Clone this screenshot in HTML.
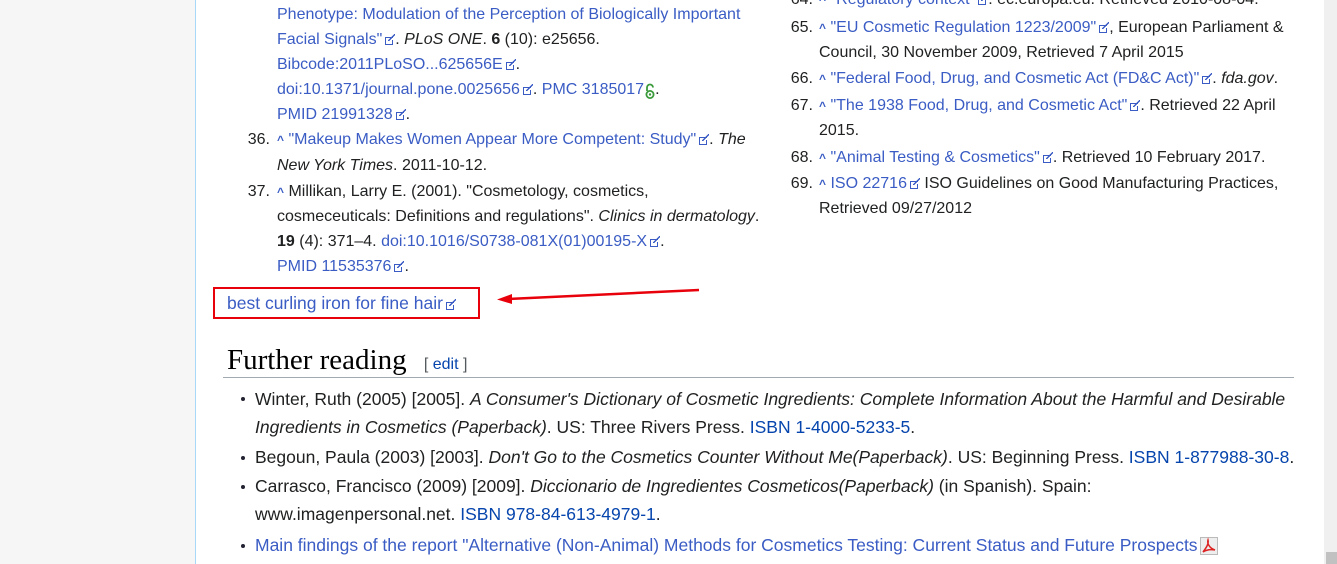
<!DOCTYPE html>
<html><head><meta charset="utf-8"><style>
body{margin:0;width:1337px;height:564px;overflow:hidden;background:#fff;font-family:"Liberation Sans",Arial,sans-serif;font-size:16px;color:#202122;position:relative}
.l{position:absolute;white-space:nowrap;line-height:20px}
.f{font-size:17.5px}
a{color:#3a5cc4;text-decoration:none}
a.d{color:#0645ad}
.e{display:inline-block;width:12px;height:11px;vertical-align:-1px;margin-left:1px;background:
linear-gradient(#3a5cc4,#3a5cc4) 2px 3px/8px 1px no-repeat,
linear-gradient(#3a5cc4,#3a5cc4) 2px 10px/8px 1px no-repeat,
linear-gradient(#3a5cc4,#3a5cc4) 2px 3px/1px 8px no-repeat,
linear-gradient(#3a5cc4,#3a5cc4) 9px 6px/1px 5px no-repeat,
linear-gradient(135deg,transparent 45%,#3a5cc4 45%,#3a5cc4 60%,transparent 60%) 5px 0/7px 7px no-repeat}
.n{position:absolute;text-align:right;width:30px;line-height:20px}
.c{color:#3a5cc4;font-weight:bold;font-size:12px}
.b{position:absolute;width:5px;height:5px;border-radius:50%;background:#202122}
</style></head><body>
<div style="position:absolute;left:0;top:0;width:195px;height:564px;background:#f6f6f6"></div>
<div style="position:absolute;left:195px;top:0;width:1px;height:564px;background:#a7d7f9"></div>
<div style="position:absolute;left:1324px;top:0;width:13px;height:564px;background:#f0f0f0"></div>
<div style="position:absolute;left:1326px;top:552px;width:11px;height:12px;background:#c1c1c1"></div>

<div class="l" style="left:277px;top:5px"><a>Phenotype: Modulation of the Perception of Biologically Important</a></div>
<div class="l" style="left:277px;top:30px"><a>Facial Signals"</a><span class="e"></span>. <i>PLoS ONE</i>. <b>6</b> (10): e25656.</div>
<div class="l" style="left:277px;top:55px"><a>Bibcode:2011PLoSO...625656E</a><span class="e"></span>.</div>
<div class="l" style="left:277px;top:80px"><a>doi:10.1371/journal.pone.0025656</a><span class="e"></span>. <a>PMC 3185017</a><svg width="10" height="16" style="vertical-align:-5px;margin-left:1px" viewBox="0 0 10 16"><path d="M2 8V4.5a3 3 0 0 1 6 0" fill="none" stroke="#3a9a3a" stroke-width="1.8"/><circle cx="5" cy="11.5" r="3.6" fill="none" stroke="#3a9a3a" stroke-width="1.8"/><circle cx="5" cy="11.5" r="1.2" fill="#3a9a3a"/></svg>.</div>
<div class="l" style="left:277px;top:105px"><a>PMID 21991328</a><span class="e"></span>.</div>
<div class="n" style="left:240px;top:130px">36.</div>
<div class="l" style="left:277px;top:130px"><span class="c">^</span> <a>"Makeup Makes Women Appear More Competent: Study"</a><span class="e"></span>. <i>The</i></div>
<div class="l" style="left:277px;top:156px"><i>New York Times</i>. 2011-10-12.</div>
<div class="n" style="left:240px;top:182px">37.</div>
<div class="l" style="left:277px;top:182px"><span class="c">^</span> Millikan, Larry E. (2001). "Cosmetology, cosmetics,</div>
<div class="l" style="left:277px;top:207px">cosmeceuticals: Definitions and regulations". <i>Clinics in dermatology</i>.</div>
<div class="l" style="left:277px;top:232px"><b>19</b> (4): 371–4. <a>doi:10.1016/S0738-081X(01)00195-X</a><span class="e"></span>.</div>
<div class="l" style="left:277px;top:257px"><a>PMID 11535376</a><span class="e"></span>.</div>

<div class="l" style="left:819px;top:-10px"><span class="c">^</span> <a>"Regulatory context"</a><span class="e"></span>. ec.europa.eu. Retrieved 2010-08-04.</div>
<div class="n" style="left:783px;top:-10px">64.</div>
<div class="n" style="left:783px;top:18px">65.</div>
<div class="l" style="left:819px;top:18px"><span class="c">^</span> <a>"EU Cosmetic Regulation 1223/2009"</a><span class="e"></span>, European Parliament &amp;</div>
<div class="l" style="left:819px;top:43px">Council, 30 November 2009, Retrieved 7 April 2015</div>
<div class="n" style="left:783px;top:69px">66.</div>
<div class="l" style="left:819px;top:69px"><span class="c">^</span> <a>"Federal Food, Drug, and Cosmetic Act (FD&amp;C Act)"</a><span class="e"></span>. <i>fda.gov</i>.</div>
<div class="n" style="left:783px;top:96px">67.</div>
<div class="l" style="left:819px;top:96px"><span class="c">^</span> <a>"The 1938 Food, Drug, and Cosmetic Act"</a><span class="e"></span>. Retrieved 22 April</div>
<div class="l" style="left:819px;top:121px">2015.</div>
<div class="n" style="left:783px;top:148px">68.</div>
<div class="l" style="left:819px;top:148px"><span class="c">^</span> <a>"Animal Testing &amp; Cosmetics"</a><span class="e"></span>. Retrieved 10 February 2017.</div>
<div class="n" style="left:783px;top:174px">69.</div>
<div class="l" style="left:819px;top:174px"><span class="c">^</span> <a>ISO 22716</a><span class="e"></span> ISO Guidelines on Good Manufacturing Practices,</div>
<div class="l" style="left:819px;top:199px">Retrieved 09/27/2012</div>

<div style="position:absolute;left:213px;top:287px;width:263px;height:28px;border:2px solid #e8000b"></div>
<div class="l f" style="left:227px;top:293px"><a>best curling iron for fine hair</a><span class="e"></span></div>
<svg style="position:absolute;left:490px;top:280px" width="220" height="30"><line x1="209" y1="10" x2="18" y2="19" stroke="#e8000b" stroke-width="2.5"/><polygon points="7,19.5 22,14 22,24" fill="#e8000b"/></svg>

<div class="l" style="left:227px;top:343px;font-family:'Liberation Serif',serif;font-size:29px;line-height:34px;color:#000">Further reading <span style="font-family:'Liberation Sans',sans-serif;font-size:16px;color:#54595d;margin-left:10px">[ <a class="d" style="color:#0645ad">edit</a> ]</span></div>
<div style="position:absolute;left:223px;top:377px;width:1071px;height:1px;background:#a2a9b1"></div>

<div class="b" style="left:241px;top:397px;width:4px;height:4px;background:#223"></div>
<div class="l f" style="left:255px;top:389px">Winter, Ruth (2005) [2005]. <i>A Consumer's Dictionary of Cosmetic Ingredients: Complete Information About the Harmful and Desirable</i></div>
<div class="l f" style="left:255px;top:417px"><i>Ingredients in Cosmetics (Paperback)</i>. US: Three Rivers Press. <a class="d">ISBN 1-4000-5233-5</a>.</div>
<div class="b" style="left:241px;top:456px;width:4px;height:4px;background:#223"></div>
<div class="l f" style="left:255px;top:447px">Begoun, Paula (2003) [2003]. <i>Don't Go to the Cosmetics Counter Without Me(Paperback)</i>. US: Beginning Press. <a class="d">ISBN 1-877988-30-8</a>.</div>
<div class="b" style="left:241px;top:485px;width:4px;height:4px;background:#223"></div>
<div class="l f" style="left:255px;top:476px">Carrasco, Francisco (2009) [2009]. <i>Diccionario de Ingredientes Cosmeticos(Paperback)</i> (in Spanish). Spain:</div>
<div class="l f" style="left:255px;top:504px">www.imagenpersonal.net. <a class="d">ISBN 978-84-613-4979-1</a>.</div>
<div class="b" style="left:241px;top:544px;width:4px;height:4px;background:#223"></div>
<div class="l f" style="left:255px;top:535px"><a>Main findings of the report "Alternative (Non-Animal) Methods for Cosmetics Testing: Current Status and Future Prospects</a><svg width="18" height="18" viewBox="0 0 18 18" style="vertical-align:-4px;margin-left:2px"><rect x="0.5" y="0.5" width="17" height="17" fill="#eee" stroke="#bbb"/><path d="M3 15C6 11 9 7 8 3c-1 3 1 8 7 10C10 12 6 13 3 15z" fill="none" stroke="#d22" stroke-width="1.5"/></svg></div>
</body></html>
